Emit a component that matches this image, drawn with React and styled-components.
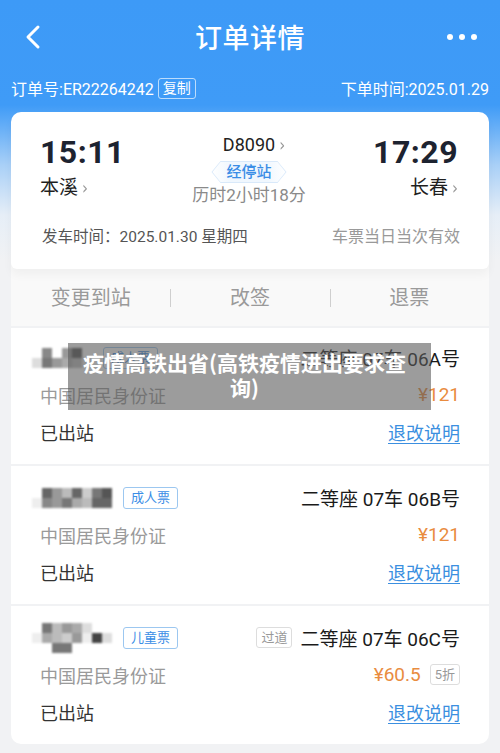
import React from "react";
import styled, { createGlobalStyle } from "styled-components";

const Global = createGlobalStyle`
  html, body { margin: 0; padding: 0; }
  body {
    width: 500px;
    background: #f1f2f4;
    font-family: Roboto, "Noto Sans CJK SC", sans-serif;
  }
  * { box-sizing: border-box; }
`;

const Page = styled.div`
  position: relative;
  width: 500px;
  height: 753px;
  overflow: hidden;
  background: linear-gradient(
    to bottom,
    #3d9af7 0px,
    #3f9bf7 105px,
    #a9d0f7 165px,
    #e6eef7 215px,
    #f1f2f4 260px,
    #f1f2f4 100%
  );
`;

const NavBar = styled.div`
  height: 76px;
  padding-bottom: 3px;
  display: grid;
  grid-template-columns: 60px 1fr 60px;
  align-items: center;
  color: #fff;
`;

const Back = styled.div`
  display: flex;
  justify-content: center;
  padding-left: 6px;
`;

const Title = styled.div`
  text-align: center;
  font-size: 27px;
  font-weight: 500;
  letter-spacing: 0.5px;
`;

const Dots = styled.div`
  display: flex;
  gap: 6px;
  justify-content: flex-start;
  padding-left: 7px;
  span {
    width: 6px;
    height: 6px;
    border-radius: 50%;
    background: #fff;
  }
`;

const OrderRow = styled.div`
  height: 24px;
  padding: 0 11px;
  display: flex;
  align-items: center;
  justify-content: space-between;
  color: #fff;
  font-size: 16px;
  margin-bottom: 12px;
`;

const OrderLeft = styled.div`
  display: flex;
  align-items: center;
  gap: 4px;
`;

const CopyTag = styled.span`
  font-size: 14px;
  line-height: 19px;
  padding: 0 4px;
  border: 1px solid rgba(255, 255, 255, 0.65);
  border-radius: 3px;
`;

const Sheet = styled.div`
  margin: 0 11px;
  display: flex;
  flex-direction: column;
  gap: 2px;
`;

const TripCard = styled.div`
  background: #fff;
  border-radius: 10px 10px 6px 6px;
  padding: 22px 31px 21px 29px;
  position: relative;
  z-index: 1;
  box-shadow: 0 6px 10px rgba(0, 0, 0, 0.04);
`;

const TripGrid = styled.div`
  display: grid;
  grid-template-columns: 1fr auto 1fr;
`;

const Endpoint = styled.div`
  display: flex;
  flex-direction: column;
  align-items: ${(p) => (p.$right ? "flex-end" : "flex-start")};
`;

const Time = styled.div`
  font-size: 32px;
  font-weight: 700;
  line-height: 36px;
  color: #1d2330;
  letter-spacing: 0.5px;
`;

const Station = styled.div`
  margin-top: 6px;
  font-size: 19px;
  line-height: 24px;
  color: #1f1f1f;
  display: flex;
  align-items: center;
  gap: 4px;
`;

const Chev = styled.span`
  color: #999;
  font-size: 15px;
  font-family: "DejaVu Sans", sans-serif;
  transform: scaleY(1.2);
`;

const Middle = styled.div`
  display: flex;
  flex-direction: column;
  align-items: center;
`;

const Train = styled.div`
  font-size: 18px;
  line-height: 22px;
  color: #222;
  display: flex;
  align-items: center;
  gap: 4px;
  padding-left: 10px;
`;

const StopTag = styled.div`
  margin-top: 5px;
  height: 22px;
  padding: 1px;
  background: #d9e9fa;
  clip-path: polygon(9px 0, calc(100% - 9px) 0, 100% 50%, calc(100% - 9px) 100%, 9px 100%, 0 50%);
`;

const StopInner = styled.div`
  height: 20px;
  padding: 0 14px;
  font-size: 15px;
  line-height: 20px;
  color: #3a8de6;
  font-weight: 500;
  background: linear-gradient(to right, #fff 0%, #f0f7fe 25%, #f0f7fe 75%, #fff 100%);
  clip-path: polygon(8px 0, calc(100% - 8px) 0, 100% 50%, calc(100% - 8px) 100%, 8px 100%, 0 50%);
`;

const Duration = styled.div`
  margin-top: 1px;
  font-size: 17px;
  line-height: 22px;
  color: #8a8a8a;
`;

const DepartRow = styled.div`
  margin-top: 20px;
  display: flex;
  justify-content: space-between;
  align-items: center;
  line-height: 22px;
  padding-left: 2px;
`;

const DepartText = styled.div`
  font-size: 15.5px;
  color: #555;
`;

const ValidText = styled.div`
  font-size: 16px;
  color: #999;
  margin-right: -2px;
`;

const ActionBar = styled.div`
  margin-top: -6px;
  height: 63px;
  padding-top: 4px;
  background: #f9f9f9;
  display: grid;
  grid-template-columns: repeat(3, 1fr);
  align-items: center;
`;

const Action = styled.div`
  text-align: center;
  font-size: 20px;
  color: #9a9a9a;
  position: relative;
  ${(p) =>
    p.$divider &&
    `
    &::before {
      content: "";
      position: absolute;
      left: 0;
      top: 50%;
      width: 1px;
      height: 18px;
      margin-top: -8px;
      background: #cfcfcf;
    }
  `}
`;

const PassengerCard = styled.div`
  background: #fff;
  padding: ${(p) => (p.$first ? "11px" : "13px")} 29px 14px 29px;
  border-radius: ${(p) => (p.$last ? "0 0 10px 10px" : "0")};
  display: grid;
  grid-auto-rows: 37px;
`;

const Row = styled.div`
  display: flex;
  align-items: center;
  justify-content: space-between;
`;

const NameBox = styled.div`
  display: flex;
  align-items: center;
  gap: 11px;
`;

const Mosaic = styled.div`
  display: grid;
  grid-template-columns: repeat(${(p) => p.$cols}, 10px);
  grid-auto-rows: 10px;
  filter: blur(1.3px);
  margin-left: -8px;
  span {
    display: block;
  }
`;

const TypeTag = styled.span`
  font-size: 13px;
  line-height: 20px;
  padding: 0 7px;
  color: #3a8de6;
  border: 1px solid #9cc7f0;
  border-radius: 3px;
`;

const Seat = styled.div`
  display: flex;
  align-items: center;
  gap: 8px;
  font-size: 19px;
  color: #1a1a1a;
`;

const GreyTag = styled.span`
  font-size: 13px;
  line-height: 19px;
  padding: 0 4px;
  color: #999;
  border: 1px solid #ddd;
  border-radius: 3px;
`;

const IdText = styled.div`
  font-size: 18px;
  color: #9a9a9a;
`;

const Price = styled.div`
  display: flex;
  align-items: center;
  gap: 9px;
  font-size: 19px;
  color: #e98c3f;
`;

const Status = styled.div`
  font-size: 18px;
  color: #333;
`;

const Link = styled.a`
  font-size: 18px;
  color: #3b8fe0;
  text-decoration: underline;
  text-underline-offset: 3px;
`;

const Watermark = styled.div`
  position: absolute;
  left: 68px;
  top: 343px;
  width: 363px;
  height: 67px;
  background: rgba(90, 90, 90, 0.6);
  color: #fff;
  font-weight: 700;
  font-size: 21px;
  line-height: 25px;
  text-align: center;
  padding: 7px 20px 0 10px;
  font-family: "Noto Sans CJK SC", sans-serif;
`;

const shades = (arr) =>
  arr.map((c, i) => <span key={i} style={{ background: c }} />);

const mosaics = [
  {
    cols: 6,
    cells: [
      "#fff", "#888", "#fff", "#999", "#555", "#fff",
      "#ddd", "#777", "#999", "#aaa", "#bbb", "#eee",
    ],
  },
  {
    cols: 8,
    cells: [
      "#fff", "#666", "#999", "#bbb", "#666", "#ccc", "#777", "#555",
      "#eee", "#888", "#999", "#777", "#aaa", "#bbb", "#666", "#666",
    ],
  },
  {
    cols: 8,
    cells: [
      "#fff", "#777", "#bbb", "#999", "#aaa", "#ddd", "#fff", "#fff",
      "#eee", "#aaa", "#bbb", "#ccc", "#999", "#eee", "#444", "#ddd",
      "#fff", "#fff", "#777", "#777", "#fff", "#fff", "#fff", "#fff",
    ],
  },
];

const passengers = [
  { m: 0, type: "成人票", seat: "二等座 07车 06A号", price: "¥121" },
  { m: 1, type: "成人票", seat: "二等座 07车 06B号", price: "¥121" },
  { m: 2, type: "儿童票", seat: "二等座 07车 06C号", price: "¥60.5", aisle: true, discount: "5折" },
];

export default function App() {
  return (
    <>
      <Global />
      <Page>
        <NavBar>
          <Back>
            <svg width="18" height="26" viewBox="0 0 18 26">
              <path d="M14 3 L4 13 L14 23" fill="none" stroke="#fff" strokeWidth="3" strokeLinecap="round" strokeLinejoin="round" />
            </svg>
          </Back>
          <Title>订单详情</Title>
          <Dots>
            <span />
            <span />
            <span />
          </Dots>
        </NavBar>
        <OrderRow>
          <OrderLeft>
            订单号:ER22264242 <CopyTag>复制</CopyTag>
          </OrderLeft>
          <div>下单时间:2025.01.29</div>
        </OrderRow>
        <Sheet>
          <div>
            <TripCard>
              <TripGrid>
                <Endpoint>
                  <Time>15:11</Time>
                  <Station>
                    本溪<Chev>›</Chev>
                  </Station>
                </Endpoint>
                <Middle>
                  <Train>
                    D8090<Chev>›</Chev>
                  </Train>
                  <StopTag>
                    <StopInner>经停站</StopInner>
                  </StopTag>
                  <Duration>历时2小时18分</Duration>
                </Middle>
                <Endpoint $right>
                  <Time>17:29</Time>
                  <Station>
                    长春<Chev>›</Chev>
                  </Station>
                </Endpoint>
              </TripGrid>
              <DepartRow>
                <DepartText>发车时间：2025.01.30 星期四</DepartText>
                <ValidText>车票当日当次有效</ValidText>
              </DepartRow>
            </TripCard>
            <ActionBar>
              <Action>变更到站</Action>
              <Action $divider>改签</Action>
              <Action $divider>退票</Action>
            </ActionBar>
          </div>
          {passengers.map((p, i) => (
            <PassengerCard key={i} $first={i === 0} $last={i === passengers.length - 1}>
              <Row>
                <NameBox>
                  <Mosaic $cols={mosaics[p.m].cols}>{shades(mosaics[p.m].cells)}</Mosaic>
                  <TypeTag>{p.type}</TypeTag>
                </NameBox>
                <Seat>
                  {p.aisle && <GreyTag>过道</GreyTag>}
                  {p.seat}
                </Seat>
              </Row>
              <Row>
                <IdText>中国居民身份证</IdText>
                <Price>
                  {p.price}
                  {p.discount && <GreyTag>{p.discount}</GreyTag>}
                </Price>
              </Row>
              <Row>
                <Status>已出站</Status>
                <Link>退改说明</Link>
              </Row>
            </PassengerCard>
          ))}
        </Sheet>
        <Watermark>疫情高铁出省(高铁疫情进出要求查询)</Watermark>
      </Page>
    </>
  );
}
